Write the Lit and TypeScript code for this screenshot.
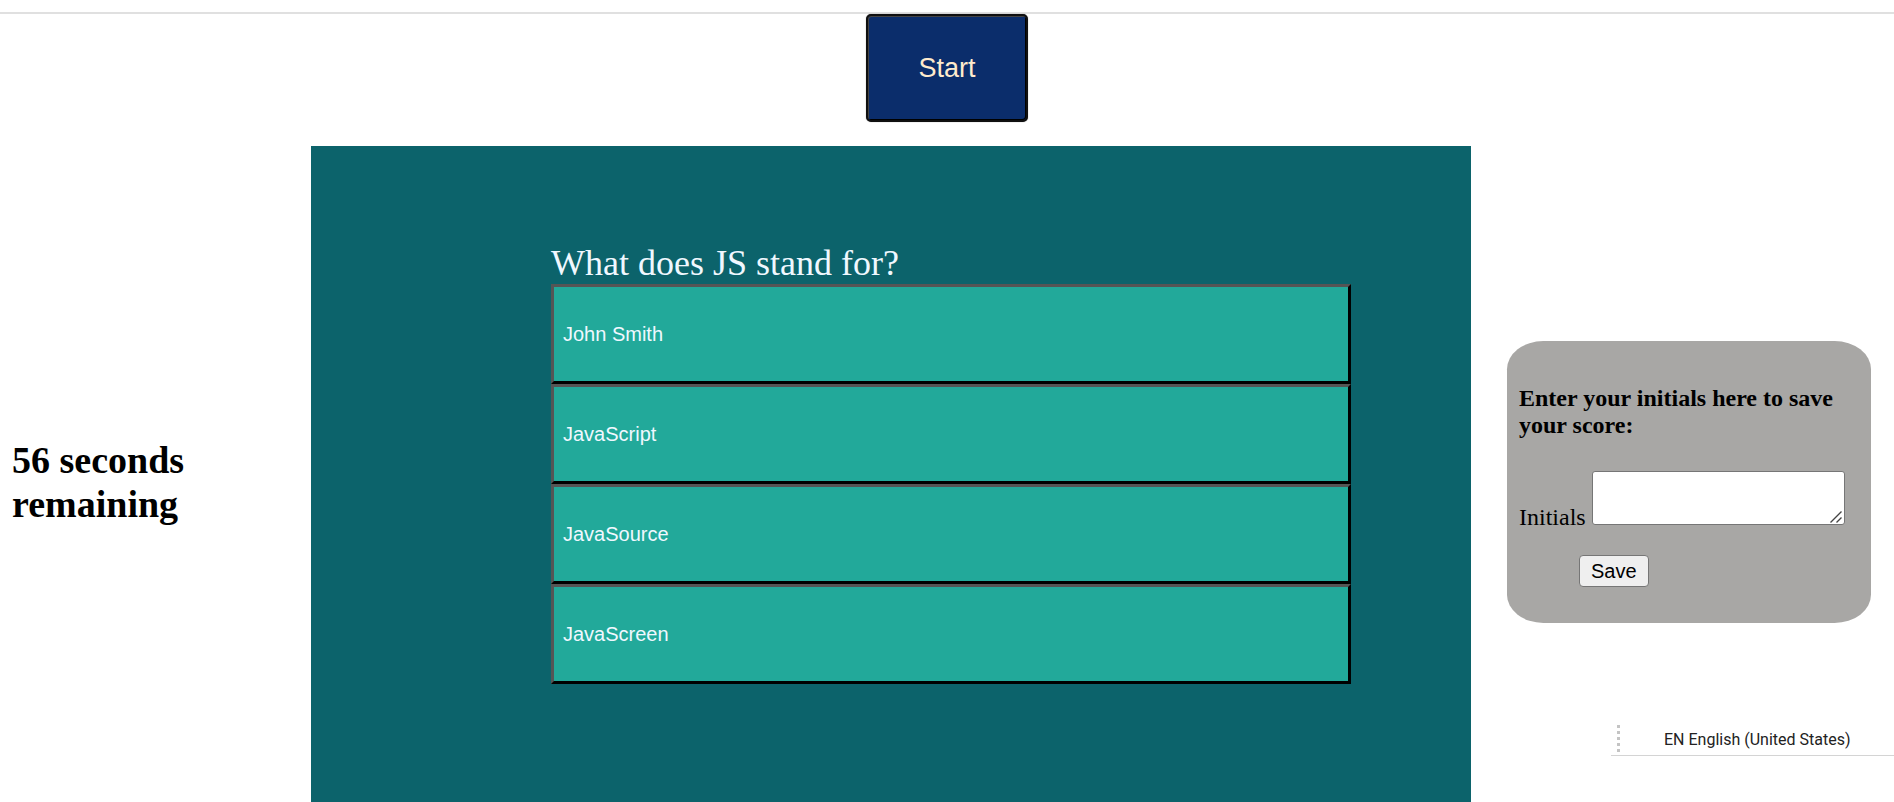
import { LitElement, html, css } from "lit";
import { customElement, property, state } from "lit/decorators.js";

@customElement("quiz-question")
class QuizQuestion extends LitElement {
  @property() prompt = "";
  @property({ type: Array }) answers: string[] = [];

  static styles = css`
    :host {
      display: block;
      box-sizing: border-box;
      padding: 96px 120px 134px 240px;
      background: #0c636b;
    }
    .prompt {
      margin: 0;
      font: 400 36px/42px "Liberation Serif", "Times New Roman", serif;
      color: #f0f8ff;
    }
    .answers {
      display: grid;
      grid-auto-rows: 100px;
    }
    .answer {
      padding: 0 9px;
      border: 3px solid;
      border-color: #555 #000 #000 #555;
      border-radius: 0;
      background: #22a99a;
      color: #f0f8ff;
      font: 20px/24px "Liberation Sans", Arial, sans-serif;
      text-align: left;
      cursor: pointer;
    }
  `;

  render() {
    return html`
      <h2 class="prompt">${this.prompt}</h2>
      <div class="answers">
        ${this.answers.map((a) => html`<button class="answer" type="button">${a}</button>`)}
      </div>
    `;
  }
}

@customElement("score-form")
class ScoreForm extends LitElement {
  static styles = css`
    :host {
      display: block;
      box-sizing: border-box;
      padding: 44px 12px 36px;
      border-radius: 10%;
      background: #a8a7a5;
      font: 24px/27px "Liberation Serif", "Times New Roman", serif;
      color: #000;
    }
    .title {
      margin: 0 0 32px;
      font-size: 24px;
      line-height: 27px;
    }
    .field {
      margin-bottom: 24px;
      white-space: nowrap;
    }
    .initials {
      box-sizing: border-box;
      width: 253px;
      height: 54px;
      margin: 0;
      padding: 3px;
      border: 1px solid #767676;
      border-radius: 3px;
      resize: none;
      background: #fff
        url("data:image/svg+xml,%3Csvg xmlns='http://www.w3.org/2000/svg' width='13' height='12'%3E%3Cpath d='M.5 11.5 11.5.5M6.5 11.5l5-5' stroke='%23444' stroke-width='1.4'/%3E%3C/svg%3E")
        no-repeat right 1px bottom 1px;
      font: 20px/23px "Liberation Mono", monospace;
    }
    .save {
      display: block;
      height: 32px;
      margin-left: 60px;
      padding: 0 11px;
      border: 1px solid #767676;
      border-radius: 4px;
      background: #efefef;
      color: #000;
      font: 20px/24px "Liberation Sans", Arial, sans-serif;
    }
  `;

  render() {
    return html`
      <form @submit=${(e: Event) => e.preventDefault()}>
        <h3 class="title">Enter your initials here to save your score:</h3>
        <div class="field">
          <label for="initials">Initials</label>
          <textarea id="initials" class="initials"></textarea>
        </div>
        <button class="save" type="submit">Save</button>
      </form>
    `;
  }
}

@customElement("app-root")
class AppRoot extends LitElement {
  @state() private seconds = 56;

  static styles = css`
    :host {
      display: block;
      position: relative;
      box-sizing: border-box;
      height: 100vh;
      padding-top: 12px;
      overflow: hidden auto;
      scrollbar-width: none;
      background: #fff;
      color: #000;
      font-family: "Liberation Serif", "Times New Roman", serif;
    }
    .top {
      display: flex;
      justify-content: center;
      padding-bottom: 24px;
      border-top: 2px solid #e0e0e0;
    }
    .start {
      width: 162px;
      height: 108px;
      border: 2px solid #101010;
      border-radius: 5px;
      background: #0b2d6b;
      box-shadow: inset 1px 1px #444, inset -1px -1px #000, 0 0 1px #777;
      color: #ffebcd;
      font: 27px/32px "Liberation Sans", Arial, sans-serif;
      cursor: pointer;
    }
    .board {
      display: grid;
      grid-template-columns: 311px minmax(0, 1fr) 423px;
      align-items: center;
    }
    .timer {
      margin: 0;
      padding: 0 100px 0 12px;
      font-size: 38px;
      line-height: 44px;
    }
    .side {
      padding: 0 23px 0 36px;
    }
    .language {
      position: absolute;
      right: 0;
      top: 724px;
      display: flex;
      align-items: center;
      box-sizing: border-box;
      width: 283px;
      height: 32px;
      padding-left: 6px;
      border-bottom: 1px solid #d4d4d4;
      color: #222;
      font: 16px/20px Roboto, sans-serif;
    }
    .grip {
      width: 3px;
      height: 30px;
      margin-right: 44px;
      background: repeating-linear-gradient(#c4c4c4 0 3px, transparent 3px 6px);
    }
  `;

  render() {
    return html`
      <header class="top">
        <button class="start" type="button">Start</button>
      </header>
      <main class="board">
        <h1 class="timer">${`${this.seconds} seconds remaining`}</h1>
        <quiz-question
          prompt="What does JS stand for?"
          .answers=${["John Smith", "JavaScript", "JavaSource", "JavaScreen"]}
        ></quiz-question>
        <aside class="side"><score-form></score-form></aside>
      </main>
      <div class="language"><span class="grip"></span>EN English (United States)</div>
    `;
  }
}
